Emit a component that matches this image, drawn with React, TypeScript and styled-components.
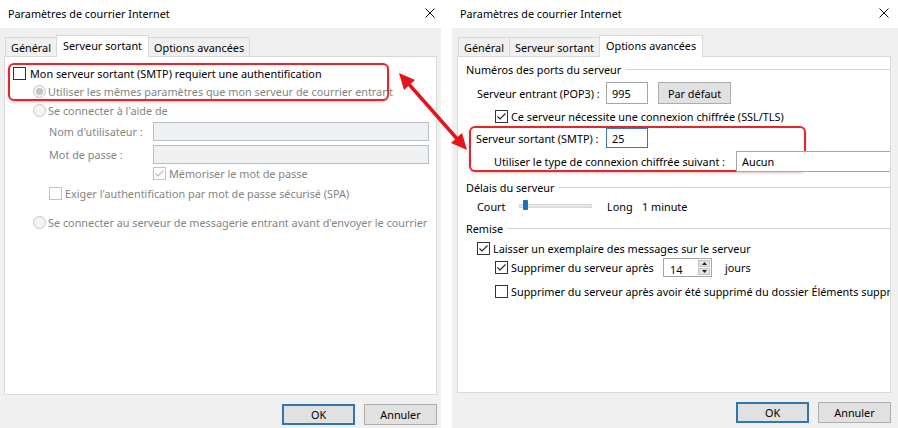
import React from 'react'
import styled, { createGlobalStyle } from 'styled-components'

const GlobalStyle = createGlobalStyle`
  html, body {
    margin: 0;
    padding: 0;
    background: #fff;
  }
  body {
    font-family: 'Noto Sans', 'Segoe UI', sans-serif;
    font-size: 10.85px;
    color: #000;
  }
`

const Page = styled.div`
  position: relative;
  width: 898px;
  height: 428px;
  display: flex;
  gap: 11px;
  overflow: hidden;
  background: #fff;
`

const Dialog = styled.div<{ $width: number }>`
  width: ${({ $width }) => $width}px;
  height: 428px;
  flex-shrink: 0;
  display: flex;
  flex-direction: column;
`

const TitleBar = styled.div<{ $padRight: number }>`
  height: 28px;
  box-sizing: border-box;
  padding: 0 ${({ $padRight }) => $padRight}px 2px 8px;
  background: #fff;
  display: flex;
  align-items: center;
  justify-content: space-between;
  font-size: 10.8px;
`

const Body = styled.div<{ $padLeft: number; $padRight: number }>`
  flex: 1;
  background: #f0f0f0;
  padding: 7px ${({ $padRight }) => $padRight}px 0 ${({ $padLeft }) => $padLeft}px;
  display: flex;
  flex-direction: column;
`

const TabStrip = styled.div`
  display: flex;
  align-items: flex-end;
  height: 21px;
  padding-left: 1px;
`

const Tab = styled.div<{ $active?: boolean }>`
  position: relative;
  z-index: ${({ $active }) => ($active ? 1 : 0)};
  height: ${({ $active }) => ($active ? 22 : 19)}px;
  margin-bottom: ${({ $active }) => ($active ? -1 : 0)}px;
  margin-left: -1px;
  padding: ${({ $active }) => ($active ? '0 6px 2px' : '0 5px')};
  box-sizing: border-box;
  display: flex;
  align-items: center;
  background: ${({ $active }) => ($active ? '#fff' : '#f0f0f0')};
  border: 1px solid #d9d9d9;
  border-bottom: none;
  &:first-child {
    margin-left: 0;
  }
`

const Panel = styled.div<{ $height: number }>`
  height: ${({ $height }) => $height}px;
  box-sizing: border-box;
  background: #fff;
  border: 1px solid #d9d9d9;
  display: flex;
  flex-direction: column;
  overflow: hidden;
`

const Footer = styled.div<{ $top: number }>`
  display: flex;
  justify-content: flex-end;
  gap: 9px;
  margin-top: ${({ $top }) => $top}px;
`

const DialogButton = styled.div<{ $default?: boolean; $width?: number; $height?: number; $left?: number }>`
  width: ${({ $width }) => $width ?? 73}px;
  height: ${({ $height }) => $height ?? 21}px;
  margin-left: ${({ $left }) => $left ?? 0}px;
  box-sizing: border-box;
  flex-shrink: 0;
  display: flex;
  align-items: center;
  justify-content: center;
  background: #e1e1e1;
  border: ${({ $default }) => ($default ? '2px solid #2f76b2' : '1px solid #adadad')};
`

const Row = styled.div<{ $top: number; $indent: number; $height?: number }>`
  display: flex;
  align-items: center;
  flex-shrink: 0;
  height: ${({ $height }) => $height ?? 16}px;
  margin-top: ${({ $top }) => $top}px;
  padding-left: ${({ $indent }) => $indent}px;
  white-space: nowrap;
`

const Label = styled.span<{ $disabled?: boolean; $width?: number; $gap?: number }>`
  color: ${({ $disabled }) => ($disabled ? '#848484' : '#000')};
  margin-left: ${({ $gap }) => $gap ?? 0}px;
  ${({ $width }) => ($width ? `width: ${$width}px; flex-shrink: 0;` : '')}
`

const Box = styled.span<{ $disabled?: boolean }>`
  width: 13px;
  height: 13px;
  box-sizing: border-box;
  flex-shrink: 0;
  display: inline-flex;
  align-items: center;
  justify-content: center;
  background: #fff;
  border: 1px solid ${({ $disabled }) => ($disabled ? '#c2c2c2' : '#333')};
`

const Radio = styled.span<{ $checked?: boolean }>`
  width: 13px;
  height: 13px;
  box-sizing: border-box;
  flex-shrink: 0;
  display: inline-flex;
  align-items: center;
  justify-content: center;
  border-radius: 50%;
  background: #f4f4f4;
  border: 1px solid #c6c6c6;
  &::after {
    content: '';
    width: 7px;
    height: 7px;
    border-radius: 50%;
    background: ${({ $checked }) => ($checked ? '#c4c4c4' : 'transparent')};
  }
`

const Field = styled.div<{ $width: number; $height: number; $variant?: 'disabled' | 'focus' | 'normal' }>`
  width: ${({ $width }) => $width}px;
  height: ${({ $height }) => $height}px;
  box-sizing: border-box;
  flex-shrink: 0;
  display: flex;
  align-items: center;
  padding-left: 5px;
  background: ${({ $variant }) => ($variant === 'disabled' ? '#eef0f2' : '#fff')};
  border: 1px solid
    ${({ $variant }) => ($variant === 'disabled' ? '#b6bfc8' : $variant === 'focus' ? '#3b7cab' : '#a6a6a6')};
`

const GroupHeading = styled.div<{ $top: number }>`
  display: flex;
  align-items: center;
  gap: 4px;
  height: 16px;
  flex-shrink: 0;
  margin-top: ${({ $top }) => $top}px;
  padding-left: 8px;
  white-space: nowrap;
  &::after {
    content: '';
    flex: 1;
    height: 1px;
    background: #d5d5d5;
  }
`

const Highlight = styled.div<{ $width: number; $height: number; $left: number; $top: number }>`
  width: ${({ $width }) => $width}px;
  height: ${({ $height }) => $height}px;
  margin: ${({ $top }) => $top}px 0 0 ${({ $left }) => $left}px;
  box-sizing: border-box;
  flex-shrink: 0;
  display: flex;
  flex-direction: column;
  border: 2px solid #e2262c;
  border-radius: 6px;
  box-shadow: 0 1px 3px rgba(120, 0, 0, 0.25);
`

const SliderTrack = styled.div`
  position: relative;
  width: 73px;
  height: 4px;
  box-sizing: border-box;
  background: #e7e7e7;
  border: 1px solid #d8d8d8;
`

const SliderThumb = styled.div`
  position: absolute;
  left: 3px;
  top: -5px;
  width: 5px;
  height: 10px;
  background: #1e6fc2;
  border-radius: 1px;
`

const SpinBox = styled.div`
  width: 49px;
  height: 19px;
  box-sizing: border-box;
  display: flex;
  border: 1px solid #a6a6a6;
  background: #fff;
`

const SpinValue = styled.span`
  flex: 1;
  padding: 3px 0 0 6px;
  display: flex;
  align-items: center;
`

const SpinButtons = styled.div`
  width: 12px;
  display: flex;
  flex-direction: column;
  gap: 1px;
  padding: 1px 1px 1px 0;
`

const SpinButton = styled.div`
  flex: 1;
  display: flex;
  align-items: center;
  justify-content: center;
  background: #e3e3e3;
  border: 1px solid #c3c3c3;
`

const Arrow = styled.svg`
  position: absolute;
  left: 0;
  top: 0;
  pointer-events: none;
`

const Check = ({ checked, disabled }: { checked?: boolean; disabled?: boolean }) => (
  <Box $disabled={disabled}>
    {checked && (
      <svg width="11" height="11" viewBox="0 0 11 11">
        <polyline points="1.5,5.5 4,8 9.5,2.5" fill="none" stroke={disabled ? '#b8b8b8' : '#222'} strokeWidth="1.1" />
      </svg>
    )}
  </Box>
)

const Close = () => (
  <svg width="10" height="10" viewBox="0 0 10 10">
    <path d="M0.5 0.5 L9.5 9.5 M9.5 0.5 L0.5 9.5" stroke="#111" strokeWidth="1" />
  </svg>
)

const SpinTriangle = ({ up }: { up?: boolean }) => (
  <svg width="5" height="3" viewBox="0 0 5 3">
    <polygon points={up ? '0,3 2.5,0 5,3' : '0,0 5,0 2.5,3'} fill="#222" />
  </svg>
)

const TABS = ['Général', 'Serveur sortant', 'Options avancées']

const Tabs = ({ active }: { active: number }) => (
  <TabStrip>
    {TABS.map((name, i) => (
      <Tab key={name} $active={i === active}>
        {name}
      </Tab>
    ))}
  </TabStrip>
)

const OutgoingServerPanel = () => (
  <Panel $height={339}>
    <Highlight $width={381} $height={38} $left={3} $top={6}>
      <Row $top={0} $indent={3}>
        <Check />
        <Label $gap={4}>Mon serveur sortant (SMTP) requiert une authentification</Label>
      </Row>
      <Row $top={2} $indent={23}>
        <Radio $checked />
        <Label $gap={2} $disabled>
          Utiliser les mêmes paramètres que mon serveur de courrier entrant
        </Label>
      </Row>
    </Highlight>
    <Row $top={1} $indent={28}>
      <Radio />
      <Label $gap={2} $disabled>
        Se connecter à l'aide de
      </Label>
    </Row>
    <Row $top={4} $indent={44} $height={19}>
      <Label $disabled $width={104}>
        Nom d'utilisateur :
      </Label>
      <Field $width={276} $height={19} $variant="disabled" />
    </Row>
    <Row $top={4} $indent={44} $height={19}>
      <Label $disabled $width={104}>
        Mot de passe :
      </Label>
      <Field $width={276} $height={19} $variant="disabled" />
    </Row>
    <Row $top={1} $indent={148}>
      <Check checked disabled />
      <Label $gap={3} $disabled>
        Mémoriser le mot de passe
      </Label>
    </Row>
    <Row $top={4} $indent={44}>
      <Check disabled />
      <Label $gap={3} $disabled>
        Exiger l'authentification par mot de passe sécurisé (SPA)
      </Label>
    </Row>
    <Row $top={13} $indent={28}>
      <Radio />
      <Label $gap={2} $disabled>
        Se connecter au serveur de messagerie entrant avant d'envoyer le courrier
      </Label>
    </Row>
  </Panel>
)

const AdvancedPanel = () => (
  <Panel $height={337}>
    <GroupHeading $top={4}>Numéros des ports du serveur</GroupHeading>
    <Row $top={5} $indent={19} $height={22}>
      <Label $width={129}>Serveur entrant (POP3) :</Label>
      <Field $width={42} $height={22}>
        995
      </Field>
      <DialogButton $width={73} $height={22} $left={10}>
        Par défaut
      </DialogButton>
    </Row>
    <Row $top={4} $indent={37}>
      <Check checked />
      <Label $gap={3}>Ce serveur nécessite une connexion chiffrée (SSL/TLS)</Label>
    </Row>
    <Highlight $width={337} $height={46} $left={11} $top={2}>
      <Row $top={0} $indent={5} $height={20}>
        <Label $width={130}>Serveur sortant (SMTP) :</Label>
        <Field $width={42} $height={20} $variant="focus">
          25
        </Field>
      </Row>
      <Row $top={3} $indent={23} $height={21}>
        <Label $width={242}>Utiliser le type de connexion chiffrée suivant :</Label>
        <Field $width={170} $height={21}>
          Aucun
        </Field>
      </Row>
    </Highlight>
    <GroupHeading $top={7}>Délais du serveur</GroupHeading>
    <Row $top={3} $indent={19}>
      <Label $width={42}>Court</Label>
      <SliderTrack>
        <SliderThumb />
      </SliderTrack>
      <Label $gap={15} $width={35}>
        Long
      </Label>
      <Label>1 minute</Label>
    </Row>
    <GroupHeading $top={6}>Remise</GroupHeading>
    <Row $top={4} $indent={19}>
      <Check checked />
      <Label $gap={3}>Laisser un exemplaire des messages sur le serveur</Label>
    </Row>
    <Row $top={2} $indent={37} $height={19}>
      <Check checked />
      <Label $gap={3} $width={152}>
        Supprimer du serveur après
      </Label>
      <SpinBox>
        <SpinValue>14</SpinValue>
        <SpinButtons>
          <SpinButton>
            <SpinTriangle up />
          </SpinButton>
          <SpinButton>
            <SpinTriangle />
          </SpinButton>
        </SpinButtons>
      </SpinBox>
      <Label $gap={13}>jours</Label>
    </Row>
    <Row $top={6} $indent={37}>
      <Check />
      <Label $gap={3}>Supprimer du serveur après avoir été supprimé du dossier Éléments supprimés</Label>
    </Row>
  </Panel>
)

const App = () => (
  <Page>
    <GlobalStyle />
    <Dialog $width={441}>
      <TitleBar $padRight={6}>
        <span>Paramètres de courrier Internet</span>
        <Close />
      </TitleBar>
      <Body $padLeft={4} $padRight={4}>
        <Tabs active={1} />
        <OutgoingServerPanel />
        <Footer $top={9}>
          <DialogButton $default>OK</DialogButton>
          <DialogButton>Annuler</DialogButton>
        </Footer>
      </Body>
    </Dialog>
    <Dialog $width={446}>
      <TitleBar $padRight={9}>
        <span>Paramètres de courrier Internet</span>
        <Close />
      </TitleBar>
      <Body $padLeft={5} $padRight={7}>
        <Tabs active={2} />
        <AdvancedPanel />
        <Footer $top={9}>
          <DialogButton $default>OK</DialogButton>
          <DialogButton>Annuler</DialogButton>
        </Footer>
      </Body>
    </Dialog>
    <Arrow width="898" height="428" viewBox="0 0 898 428">
      <line x1="407" y1="82" x2="459" y2="141" stroke="#e3141c" strokeWidth="3.5" />
      <polygon points="399,73 404,90 415,80" fill="#e3141c" />
      <polygon points="467,150 462,133 451,143" fill="#e3141c" />
    </Arrow>
  </Page>
)

export default App
